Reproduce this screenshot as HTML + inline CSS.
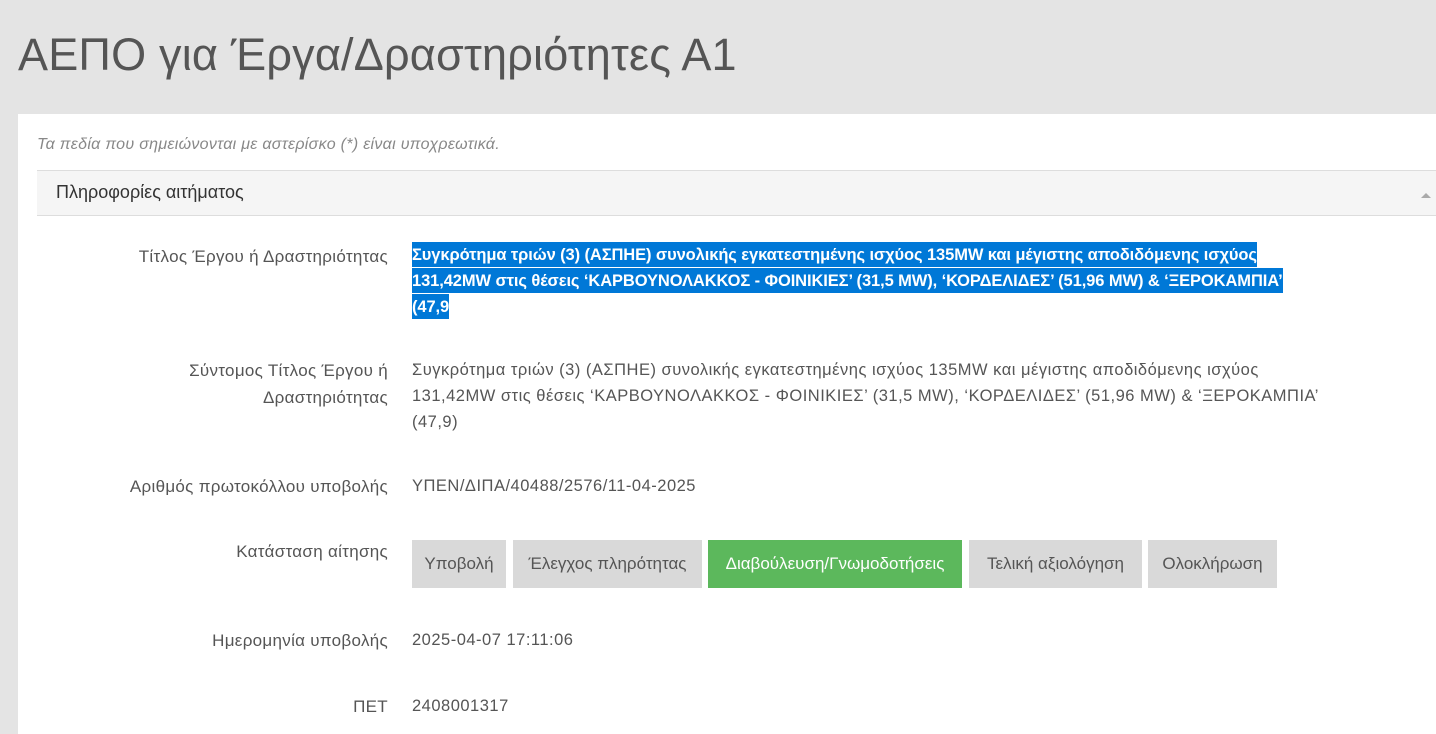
<!DOCTYPE html>
<html><head><meta charset="utf-8">
<style>
html,body{margin:0;padding:0}
body{width:1436px;height:719px;overflow:hidden;background:#e4e4e4;font-family:"Liberation Sans","DejaVu Sans",sans-serif;color:#555;position:relative}
h1{position:absolute;left:18px;top:29px;margin:0;font-weight:normal;font-size:45px;color:#555;letter-spacing:0.2px;white-space:nowrap}
.card{position:absolute;left:18px;top:114px;width:1418px;height:620px;background:#fff}
.note{position:absolute;left:37px;top:136px;font-style:italic;font-size:16px;color:#888;letter-spacing:0.3px}
.bar{position:absolute;left:37px;top:170px;width:1399px;height:46px;background:#f5f5f5;border-top:1px solid #ddd;border-bottom:1px solid #ddd;box-sizing:border-box}
.bar span{position:absolute;left:19px;top:11px;font-size:18px;color:#333}
.bar i{position:absolute;right:5px;top:22px;border-left:5px solid transparent;border-right:5px solid transparent;border-bottom:5px solid #aaa}
.lbl{position:absolute;right:1048px;text-align:right;font-size:17px;line-height:27px;color:#555;white-space:nowrap;letter-spacing:0.3px}
.val{position:absolute;left:412px;font-size:16.5px;line-height:26px;color:#555;white-space:nowrap;letter-spacing:0.5px}
.sel span{background:#0078d7;color:#fff;font-weight:bold;letter-spacing:-0.1px;padding:4px 0 3px}
.step{position:absolute;top:540px;height:48px;line-height:48px;text-align:center;font-size:17px;background:#d9d9d9;color:#555}
.step.g{background:#5cb85c;color:#fff}
</style></head><body>
<h1>ΑΕΠΟ για Έργα/Δραστηριότητες Α1</h1>
<div class="card"></div>
<div class="note">Τα πεδία που σημειώνονται με αστερίσκο (*) είναι υποχρεωτικά.</div>
<div class="bar"><span>Πληροφορίες αιτήματος</span><i></i></div>

<div class="lbl" style="top:243px">Τίτλος Έργου ή Δραστηριότητας</div>
<div class="val sel" style="top:242px"><span>Συγκρότημα τριών (3) (ΑΣΠΗΕ) συνολικής εγκατεστημένης ισχύος 135MW και μέγιστης αποδιδόμενης ισχύος </span><br><span>131,42MW στις θέσεις ‘ΚΑΡΒΟΥΝΟΛΑΚΚΟΣ - ΦΟΙΝΙΚΙΕΣ’ (31,5 MW), ‘ΚΟΡΔΕΛΙΔΕΣ’ (51,96 MW) &amp; ‘ΞΕΡΟΚΑΜΠΙΑ’ </span><br><span>(47,9</span></div>

<div class="lbl" style="top:357px">Σύντομος Τίτλος Έργου ή<br>Δραστηριότητας</div>
<div class="val" style="top:357px">Συγκρότημα τριών (3) (ΑΣΠΗΕ) συνολικής εγκατεστημένης ισχύος 135MW και μέγιστης αποδιδόμενης ισχύος<br>131,42MW στις θέσεις ‘ΚΑΡΒΟΥΝΟΛΑΚΚΟΣ - ΦΟΙΝΙΚΙΕΣ’ (31,5 MW), ‘ΚΟΡΔΕΛΙΔΕΣ’ (51,96 MW) &amp; ‘ΞΕΡΟΚΑΜΠΙΑ’<br>(47,9)</div>

<div class="lbl" style="top:473px">Αριθμός πρωτοκόλλου υποβολής</div>
<div class="val" style="top:473px">ΥΠΕΝ/ΔΙΠΑ/40488/2576/11-04-2025</div>

<div class="lbl" style="top:538px">Κατάσταση αίτησης</div>
<div class="step" style="left:412px;width:94px">Υποβολή</div>
<div class="step" style="left:513px;width:189px">Έλεγχος πληρότητας</div>
<div class="step g" style="left:708px;width:254px">Διαβούλευση/Γνωμοδοτήσεις</div>
<div class="step" style="left:969px;width:173px">Τελική αξιολόγηση</div>
<div class="step" style="left:1148px;width:129px">Ολοκλήρωση</div>

<div class="lbl" style="top:627px">Ημερομηνία υποβολής</div>
<div class="val" style="top:627px">2025-04-07 17:11:06</div>

<div class="lbl" style="top:693px">ΠΕΤ</div>
<div class="val" style="top:693px">2408001317</div>
</body></html>
